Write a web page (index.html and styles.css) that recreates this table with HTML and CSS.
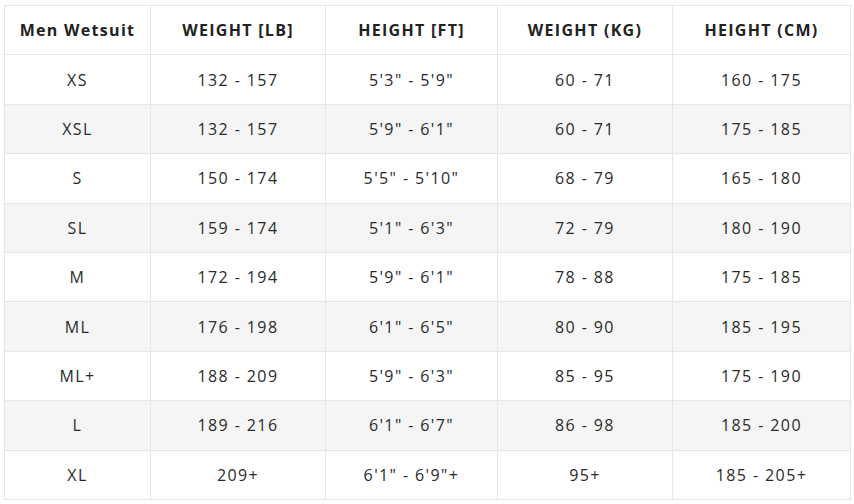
FILE: index.html
```html
<!DOCTYPE html>
<html>
<head>
<meta charset="utf-8">
<link rel="stylesheet" href="styles.css">
</head>
<body>
<table class="size-table">
<colgroup>
<col class="c1"><col class="c2"><col class="c3"><col class="c4"><col class="c5">
</colgroup>
<thead>
<tr><th>Men Wetsuit</th><th>WEIGHT [LB]</th><th>HEIGHT [FT]</th><th>WEIGHT (KG)</th><th>HEIGHT (CM)</th></tr>
</thead>
<tbody>
<tr><td>XS</td><td>132 - 157</td><td>5'3" - 5'9"</td><td>60 - 71</td><td>160 - 175</td></tr>
<tr><td>XSL</td><td>132 - 157</td><td>5'9" - 6'1"</td><td>60 - 71</td><td>175 - 185</td></tr>
<tr><td>S</td><td>150 - 174</td><td>5'5" - 5'10"</td><td>68 - 79</td><td>165 - 180</td></tr>
<tr><td>SL</td><td>159 - 174</td><td>5'1" - 6'3"</td><td>72 - 79</td><td>180 - 190</td></tr>
<tr><td>M</td><td>172 - 194</td><td>5'9" - 6'1"</td><td>78 - 88</td><td>175 - 185</td></tr>
<tr><td>ML</td><td>176 - 198</td><td>6'1" - 6'5"</td><td>80 - 90</td><td>185 - 195</td></tr>
<tr><td>ML+</td><td>188 - 209</td><td>5'9" - 6'3"</td><td>85 - 95</td><td>175 - 190</td></tr>
<tr><td>L</td><td>189 - 216</td><td>6'1" - 6'7"</td><td>86 - 98</td><td>185 - 200</td></tr>
<tr><td>XL</td><td>209+</td><td>6'1" - 6'9"+</td><td>95+</td><td>185 - 205+</td></tr>
</tbody>
</table>
</body>
</html>
```
FILE: styles.css
```css
html, body {
  margin: 0;
  padding: 0;
  background: #ffffff;
}
body {
  padding: 5px 5px 0 4px;
  font-family: "Open Sans", "DejaVu Sans", sans-serif;
  color: #1f1f1f;
}
.size-table {
  width: 846px;
  table-layout: fixed;
  border-collapse: collapse;
}
.c1 { width: 146px; }
.c2 { width: 175px; }
.c3 { width: 172px; }
.c4 { width: 175px; }
.c5 { width: 178px; }
.size-table th,
.size-table td {
  border: 1px solid #e6e6e6;
  text-align: center;
  vertical-align: middle;
  padding: 0;
  height: 48.4px;
}
.size-table th {
  font-size: 16px;
  font-weight: 700;
  letter-spacing: 1.3px;
  color: #222222;
}
.size-table td {
  font-size: 16px;
  font-weight: 400;
  letter-spacing: 1.4px;
  color: #2a2a2a;
}
.size-table tbody tr:nth-child(even) td {
  background: #f5f5f5;
}
```
